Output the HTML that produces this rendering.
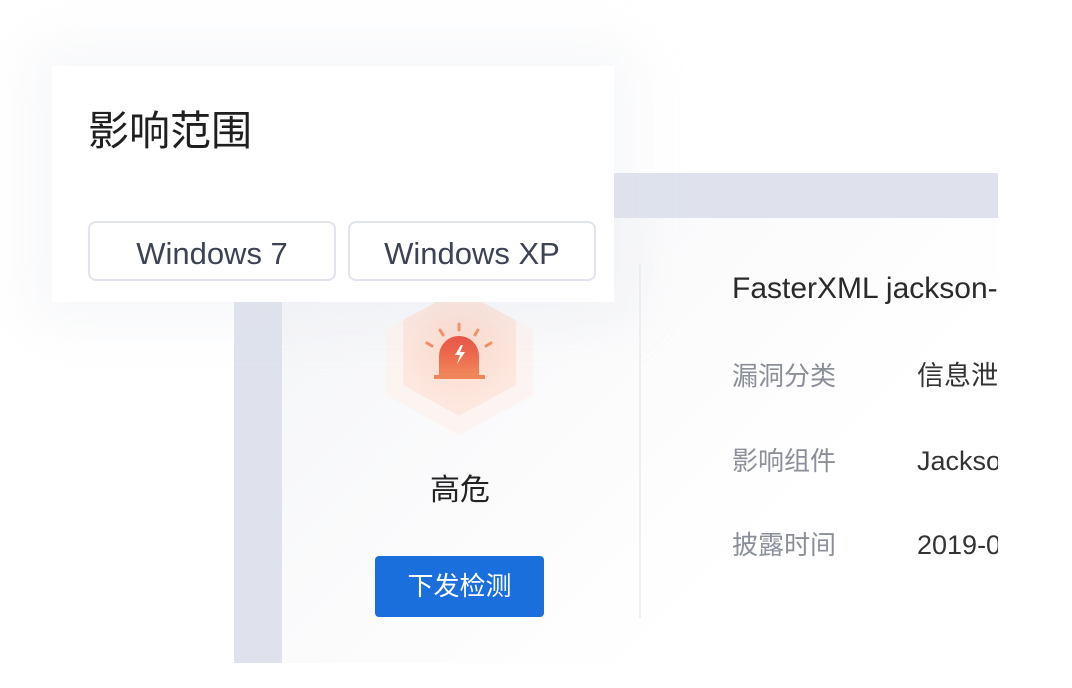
<!DOCTYPE html>
<html><head><meta charset="utf-8"><style>
*{margin:0;padding:0;box-sizing:border-box}
body{width:1072px;height:688px;background:#fff;position:relative;overflow:hidden;font-family:"Liberation Sans","Noto Sans CJK SC",sans-serif}
.abs{position:absolute}
.back{left:234px;top:173px;width:764px;height:490px;background:#dfe2ec}
.inner{left:282px;top:218px;width:716px;height:445px;background:linear-gradient(135deg,#f4f5f8 0%,#fbfbfc 40%,#fff 70%)}
.div{left:639px;top:265px;width:2px;height:353px;background:#eceef2}
.front{left:52px;top:66px;width:562px;height:236px;background:#fff;box-shadow:0 0 50px 20px rgba(225,227,235,0.3)}
.title{left:88px;top:106px;font-size:41px;color:#1f1f1f;line-height:50px}
.btn{top:221px;height:60px;border:2px solid #e1e4ec;border-radius:8px;font-size:31px;color:#3d4354;text-align:center;line-height:62px}
.lbl{left:732px;font-size:26px;color:#8a8f99;line-height:30px}
.val{left:917px;font-size:27px;color:#333;line-height:30px;width:81px;overflow:hidden;white-space:nowrap}
</style></head><body>
<div class="abs back"></div>
<div class="abs inner"></div>
<div class="abs div"></div>
<svg class="abs" style="left:380px;top:290px" width="160" height="150" viewBox="380 290 160 150">
<defs><radialGradient id="g" cx="0.5" cy="0.4" r="0.6"><stop offset="0" stop-color="#fbd9cb"/><stop offset="1" stop-color="#fde9e1"/></radialGradient>
<linearGradient id="s" x1="0" y1="0" x2="0" y2="1"><stop offset="0" stop-color="#e8493a"/><stop offset="1" stop-color="#f28a5c"/></linearGradient></defs>
<polygon points="459,290 533,330 533,395 459,435 386,395 386,330" fill="#fdf3ef" opacity="0.8"/>
<polygon points="459,290 516,320 516,385 459,416 403,385 403,320" fill="url(#g)"/>
<path d="M439 377 V356 a20 20 0 0 1 40 0 V377 Z" fill="url(#s)"/>
<rect x="434" y="375" width="51" height="4" fill="#f0845a"/>
<path d="M461 345 l-6 10 h5 l-3 9 l8 -12 h-5 l3 -7z" fill="#fff"/>
<g stroke="#f08a5c" stroke-width="3" stroke-linecap="round"><line x1="459" y1="324" x2="459" y2="330"/><line x1="440" y1="330" x2="443" y2="335"/><line x1="478" y1="330" x2="475" y2="335"/><line x1="427" y1="343" x2="432" y2="346"/><line x1="491" y1="343" x2="486" y2="346"/></g>
</svg>
<div class="abs" style="left:400px;top:473px;width:120px;text-align:center;font-size:30px;color:#222;line-height:36px">高危</div>
<div class="abs" style="left:375px;top:556px;width:169px;height:61px;background:#1a6fdc;border-radius:4px;color:#fff;font-size:26px;text-align:center;line-height:61px">下发检测</div>
<div class="abs" style="left:732px;top:272px;width:266px;overflow:hidden;white-space:nowrap;font-size:30px;color:#2a2a2a;line-height:34px">FasterXML jackson-databind</div>
<div class="abs lbl" style="top:361px">漏洞分类</div><div class="abs val" style="top:361px">信息泄露</div>
<div class="abs lbl" style="top:446px">影响组件</div><div class="abs val" style="top:446px">Jackson</div>
<div class="abs lbl" style="top:530px">披露时间</div><div class="abs val" style="top:530px">2019-09</div>
<div class="abs front"></div>
<div class="abs title">影响范围</div>
<div class="abs btn" style="left:88px;width:248px">Windows 7</div>
<div class="abs btn" style="left:348px;width:248px">Windows XP</div>
</body></html>
